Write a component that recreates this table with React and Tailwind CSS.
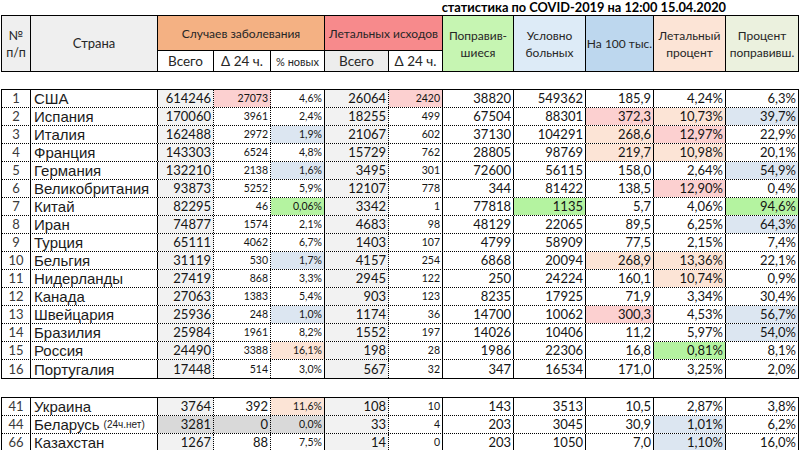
import React from "react";

const COLS =
  "grid grid-cols-[29px_127px_56px_57px_54px_64px_54px_71px_72px_68px_72px_73px]";
const LATO = "[font-family:Lato,'Open_Sans',sans-serif]";
const ARIAL = "[font-family:'Liberation_Sans',Arial,sans-serif]";

const P = "bg-[#fcd0d0]";
const O = "bg-[#fce4d6]";
const B = "bg-[#dce6f1]";
const G = "bg-[#b4f3a0]";
const D = "bg-[#d9d9d9]";
const L = "bg-[#f2f2f2]";

// values: c3..c12
const main = [
  [1, "США", ["614246", "27073", "4,6%", "26064", "2420", "38820", "549362", "185,9", "4,24%", "6,3%"], { 1: P, 4: P }],
  [2, "Испания", ["170060", "3961", "2,4%", "18255", "499", "67504", "88301", "372,3", "10,73%", "39,7%"], { 7: P, 8: O, 9: B }],
  [3, "Италия", ["162488", "2972", "1,9%", "21067", "602", "37130", "104291", "268,6", "12,97%", "22,9%"], { 2: B, 7: O, 8: P }],
  [4, "Франция", ["143303", "6524", "4,8%", "15729", "762", "28805", "98769", "219,7", "10,98%", "20,1%"], { 7: O, 8: O }],
  [5, "Германия", ["132210", "2138", "1,6%", "3495", "301", "72600", "56115", "158,0", "2,64%", "54,9%"], { 2: B, 9: B }],
  [6, "Великобритания", ["93873", "5252", "5,9%", "12107", "778", "344", "81422", "138,5", "12,90%", "0,4%"], { 8: P }],
  [7, "Китай", ["82295", "46", "0,06%", "3342", "1", "77818", "1135", "5,7", "4,06%", "94,6%"], { 2: G, 6: G, 9: G }],
  [8, "Иран", ["74877", "1574", "2,1%", "4683", "98", "48129", "22065", "89,5", "6,25%", "64,3%"], { 9: B }],
  [9, "Турция", ["65111", "4062", "6,7%", "1403", "107", "4799", "58909", "77,5", "2,15%", "7,4%"], {}],
  [10, "Бельгия", ["31119", "530", "1,7%", "4157", "254", "6868", "20094", "268,9", "13,36%", "22,1%"], { 2: B, 7: O, 8: O }],
  [11, "Нидерланды", ["27419", "868", "3,3%", "2945", "122", "250", "24224", "160,1", "10,74%", "0,9%"], { 8: O }],
  [12, "Канада", ["27063", "1383", "5,4%", "903", "123", "8235", "17925", "71,9", "3,34%", "30,4%"], {}],
  [13, "Швейцария", ["25936", "248", "1,0%", "1174", "36", "14700", "10062", "300,3", "4,53%", "56,7%"], { 2: B, 7: P, 9: B }],
  [14, "Бразилия", ["25984", "1961", "8,2%", "1552", "197", "14026", "10406", "11,2", "5,97%", "54,0%"], { 9: B }],
  [15, "Россия", ["24490", "3388", "16,1%", "198", "28", "1986", "22306", "16,8", "0,81%", "8,1%"], { 2: O, 8: G }],
  [16, "Португалия", ["17448", "514", "3,0%", "567", "32", "347", "16534", "171,0", "3,25%", "2,0%"], {}],
];

const extra = [
  [41, "Украина", ["3764", "392", "11,6%", "108", "10", "143", "3513", "10,5", "2,87%", "3,8%"], { 2: O }, null],
  [44, "Беларусь", ["3281", "0", "0,0%", "33", "4", "203", "3045", "30,9", "1,01%", "6,2%"], { 0: D, 1: D, 2: D, 8: B }, "(24ч.нет)"],
  [66, "Казахстан", ["1267", "88", "7,5%", "14", "0", "203", "1050", "7,0", "1,10%", "16,0%"], { 8: B }, null],
];

const BIG = "text-[13px]";
const SMALL = "text-[10.5px]";

function Row({ r, last, bigDelta, h }) {
  const [n, name, vals, bgs, suffix] = r;
  return (
    <div
      className={`${COLS} ${h} ${last ? "" : "border-b border-dotted border-black"} leading-none`}
    >
      <div className={`border-r border-black flex items-center justify-center ${LATO} text-[13px] text-[#3a3a3a]`}>
        {n}
      </div>
      <div className={`border-r border-black flex items-center pl-[3px] ${ARIAL} text-[15px] text-[#1a1a1a] whitespace-nowrap`}>
        {name}
        {suffix && <span className="text-[10px] ml-[4px]">{suffix}</span>}
      </div>
      {vals.map((v, i) => {
        const dotted = i === 0 || i === 1 || i === 3;
        const baseBg = i === 0 || i === 3 ? L : "";
        const bg = bgs[i] || baseBg;
        let size = BIG;
        if (i === 2 || i === 4) size = SMALL;
        if (i === 1) size = bigDelta ? BIG : SMALL;
        return (
          <div
            key={i}
            className={`border-r border-black ${dotted ? "border-dotted" : ""} ${bg} flex items-center justify-end pr-[2px] ${LATO} ${size} text-[#141414]`}
          >
            {v}
          </div>
        );
      })}
    </div>
  );
}

function H({ className = "", children }) {
  return (
    <div
      className={`border-r border-b border-black flex items-center justify-center text-center whitespace-nowrap ${LATO} leading-[17px] text-[#262626] ${className}`}
    >
      {children}
    </div>
  );
}

export default function App() {
  return (
    <div className="w-[799px] h-[450px] bg-white overflow-hidden">
      <div className={`h-[15px] flex justify-end pr-[73px] ${LATO} font-bold text-[12.8px] leading-[15px] text-black whitespace-nowrap`}>
        статистика по COVID-2019 на 12:00 15.04.2020
      </div>
      <div className={`${COLS} grid-rows-[35px_21px] ml-[1px] border-l border-t border-black text-[12px]`}>
        <H className="row-span-2 bg-[#efefef] text-[12.5px]">
          <span>
            №<br />п/п
          </span>
        </H>
        <H className="row-span-2 bg-[#efefef] text-[13px]">Страна</H>
        <H className="col-span-3 bg-[#f4b183] text-[12px]">Случаев заболевания</H>
        <H className="col-span-2 bg-[#f78a8c] text-[12px]">Летальных исходов</H>
        <H className="row-span-2 bg-[#c6f5b2] text-[12px]">
          <span>
            Поправив-
            <br />
            шиеся
          </span>
        </H>
        <H className="row-span-2 bg-[#ddebf7] text-[12px]">
          <span>
            Условно
            <br />
            больных
          </span>
        </H>
        <H className="row-span-2 bg-[#bdd7ee] text-[12px]">На 100 тыс.</H>
        <H className="row-span-2 bg-[#fce4d6] text-[12px]">
          <span>
            Летальный
            <br />
            процент
          </span>
        </H>
        <H className="row-span-2 bg-[#ebf1de] text-[12px]">
          <span>
            Процент
            <br />
            поправивш.
          </span>
        </H>
        <H className="bg-white text-[13.5px]">Всего</H>
        <H className="bg-white text-[13.5px]">Δ 24 ч.</H>
        <H className="bg-white text-[11px]">% новых</H>
        <H className="bg-[#ededed] text-[13.5px]">Всего</H>
        <H className="bg-white text-[13.5px]">Δ 24 ч.</H>
      </div>

      <div className="mt-[17px] ml-[1px] border-l border-t border-b border-black">
        {main.map((r, i) => (
          <Row key={i} r={r} last={i === main.length - 1} h="h-[18px]" />
        ))}
      </div>

      <div className="mt-[18px] ml-[1px] border-l border-t border-b border-black">
        {extra.map((r, i) => (
          <Row
            key={i}
            r={r}
            last={i === extra.length - 1}
            bigDelta
            h={i === extra.length - 1 ? "h-[16px]" : "h-[18px]"}
          />
        ))}
      </div>
    </div>
  );
}
